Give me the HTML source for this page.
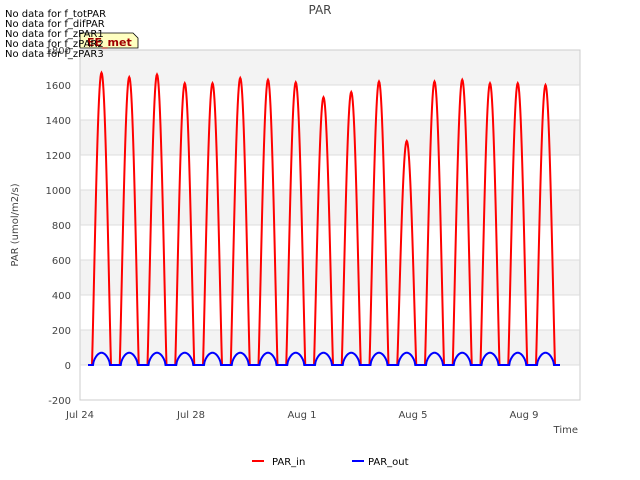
<!DOCTYPE html>
<html><head><meta charset="utf-8"><style>
body{margin:0;width:640px;height:480px;background:#fff;font-family:"DejaVu Sans",sans-serif;overflow:hidden;position:relative}
.nd{position:absolute;left:5px;font-size:10px;color:#000;line-height:10px}
</style></head><body>
<svg id="s" width="640" height="480" style="position:absolute;left:0;top:0" font-family="DejaVu Sans, sans-serif">
<rect x="80" y="50" width="500" height="350" fill="#fff" stroke="#ccc"/>
<g fill="#f3f3f3">
<rect x="80.5" y="50.5" width="499" height="35"/>
<rect x="80.5" y="120" width="499" height="35"/>
<rect x="80.5" y="190" width="499" height="35"/>
<rect x="80.5" y="260" width="499" height="35"/>
<rect x="80.5" y="330" width="499" height="35"/>
</g>
<g stroke="#ddd" stroke-width="1" id="grid"></g>
<g font-size="10" fill="#444" text-anchor="end" id="yl"></g>
<g font-size="10" fill="#444" text-anchor="middle">
<text x="80" y="418">Jul 24</text><text x="191" y="418">Jul 28</text><text x="302" y="418">Aug 1</text><text x="413" y="418">Aug 5</text><text x="524" y="418">Aug 9</text>
</g>
<text x="578" y="433" font-size="10" fill="#444" text-anchor="end">Time</text>
<text x="320" y="14" font-size="12" fill="#444" text-anchor="middle">PAR</text>
<text x="18" y="225" font-size="10" fill="#444" text-anchor="middle" transform="rotate(-90 18 225)">PAR (umol/m2/s)</text>
<path id="red" fill="none" stroke="#f00" stroke-width="2"/>
<path id="blue" fill="none" stroke="#00f" stroke-width="2"/>
<line x1="252" y1="461" x2="264" y2="461" stroke="#f00" stroke-width="2"/>
<text x="272" y="465" font-size="10" fill="#000">PAR_in</text>
<line x1="352" y1="461" x2="364" y2="461" stroke="#00f" stroke-width="2"/>
<text x="368" y="465" font-size="10" fill="#000">PAR_out</text>
<path d="M80 33 H133 L138 38 V48 H80 Z" fill="#ffffc0" stroke="#000" stroke-width="0.8"/>
<text x="87" y="46" font-size="11" font-weight="bold" fill="#a00000">EE_met</text>
</svg>
<div class="nd" style="top:10px">No data for f_totPAR</div>
<div class="nd" style="top:20px">No data for f_difPAR</div>
<div class="nd" style="top:30px">No data for f_zPAR1</div>
<div class="nd" style="top:40px">No data for f_zPAR2</div>
<div class="nd" style="top:50px">No data for f_zPAR3</div>
<script>
var Y=v=>365-v*0.175,g='',l='';
for(var v=-200;v<=1800;v+=200){var y=Y(v);if(v>-200&&v<1800)g+='<line x1="80" x2="580" y1="'+y+'" y2="'+y+'"/>';l+='<text x="71" y="'+(y+4)+'">'+v+'</text>';}
document.getElementById('grid').innerHTML=g;document.getElementById('yl').innerHTML=l;
var pk=[1670,1645,1660,1610,1610,1640,1630,1615,1530,1560,1620,1280,1620,1630,1610,1610,1600];
var r='M88 '+Y(0),b='M88 '+Y(0);
for(var k=0;k<17;k++){var c=102+27.75*k,s=c-10,e=c+9;
r+=' L'+s+' '+Y(0);b+=' L'+(s+1)+' '+Y(0);
for(var x=s;x<=e;x+=0.5){var t=(x-s)/(e-s),f=Math.pow(Math.sin(Math.PI*t),1.1);r+=' L'+x+' '+Y(pk[k]*f);}
for(var x=s+1;x<=e-1;x+=0.5){var t=(x-s-1)/(e-s-2);b+=' L'+x+' '+Y(70*Math.pow(Math.sin(Math.PI*t),0.6));}
r+=' L'+(e+1)+' '+Y(0);b+=' L'+(e)+' '+Y(0);}
r+=' L560 '+Y(0);b+=' L560 '+Y(0);
document.getElementById('red').setAttribute('d',r);document.getElementById('blue').setAttribute('d',b);
</script>
</body></html>
